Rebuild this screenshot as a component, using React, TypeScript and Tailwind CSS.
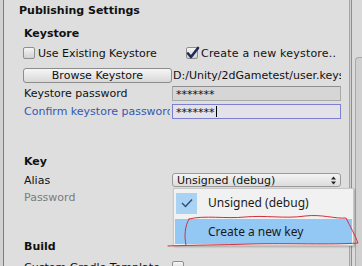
import React from 'react';

const Checkbox = ({ checked = false }: { checked?: boolean }) => (
  <div className="relative w-[12px] h-[12px] shrink-0 rounded-[2px] border border-[#8f8f8f] bg-gradient-to-b from-[#f4f4f4] to-[#d2d2d2]">
    {checked && (
      <svg className="absolute -left-[1px] -top-[2px]" width="14" height="14" viewBox="0 0 14 14">
        <path d="M2 7.5 L5 11 L12 2" fill="none" stroke="#1f2b57" strokeWidth="2.6" strokeLinecap="round" strokeLinejoin="round" />
      </svg>
    )}
  </div>
);

const Label = ({ children, className = '' }: { children: React.ReactNode; className?: string }) => (
  <div className={`w-[166px] mr-[2px] shrink-0 pl-[20px] whitespace-nowrap overflow-hidden ${className}`}>{children}</div>
);

const App = () => {
  return (
    <div className="relative w-[362px] h-[266px] overflow-hidden bg-[#dedede] flex font-['DejaVu_Sans',sans-serif] text-[11px] text-[#111] leading-none">
      {/* left edge */}
      <div className="w-[3px] bg-[#d2d2d2]" />
      <div className="w-px bg-[#7e7e7e]" />

      {/* inspector content */}
      <div className="w-[345px] flex flex-col overflow-hidden *:shrink-0">
        <div className="h-[20px] flex items-center pl-[15px] font-bold">Publishing Settings</div>

        <div className="mt-[2px] h-[22px] flex items-center pl-[20px] font-bold">Keystore</div>

        <div className="mt-[2px] h-[14px] flex items-center">
          <div className="w-[181px] shrink-0 pl-[19px] flex items-center gap-[3px]">
            <Checkbox />
            <span>Use Existing Keystore</span>
          </div>
          <div className="flex items-center gap-[3px] pl-[1px]">
            <Checkbox checked />
            <span className="tracking-[0.2px]">Create a new keystore..</span>
          </div>
        </div>

        <div className="mt-[8px] h-[15px] flex items-center">
          <div className="w-[168px] shrink-0 pl-[19px] h-full">
            <div className="h-full rounded-[3px] border border-[#8c8c8c] bg-gradient-to-b from-[#f6f6f6] to-[#d8d8d8] flex items-center justify-center">
              Browse Keystore
            </div>
          </div>
          <div className="w-[169px] overflow-hidden whitespace-nowrap pl-[1px]">D:/Unity/2dGametest/user.keystore</div>
        </div>

        <div className="mt-[3px] h-[15px] flex items-center">
          <Label>Keystore password</Label>
          <div className="w-[169px] h-full border border-[#a9a9a9] border-t-[#8e8e8e] bg-[#d6d6d6] flex items-center pl-[3px] pt-[2px]">*******</div>
        </div>

        <div className="mt-[3px] h-[15px] flex items-center">
          <Label className="text-[#3656b0]">Confirm keystore password</Label>
          <div className="w-[169px] h-full border border-[#7c80cf] bg-[#e2e2e8] flex items-center pl-[3px] pt-[2px]">
            *******<span className="ml-px w-px h-[11px] -mt-[2px] bg-black" />
          </div>
        </div>

        <div className="mt-[31px] h-[22px] flex items-center pl-[20px] font-bold">Key</div>

        <div className="mt-[1px] h-[14px] flex items-center">
          <Label>Alias</Label>
          <div className="w-[169px] h-full rounded-[3px] border border-[#9a9a9a] bg-gradient-to-b from-[#f4f4f4] to-[#dcdcdc] flex items-center justify-between pl-[4px] pr-[4px]">
            <span>Unsigned (debug)</span>
            <svg width="5" height="9" viewBox="0 0 5 9">
              <path d="M2.5 0.5 L5 3.5 L0 3.5 Z M2.5 8.5 L5 5.5 L0 5.5 Z" fill="#222" />
            </svg>
          </div>
        </div>

        <div className="mt-[3px] h-[14px] flex items-center">
          <Label className="text-[#7b7b7b]">Password</Label>
        </div>

        <div className="mt-[31px] h-[22px] flex items-center pl-[20px] font-bold">Build</div>

        <div className="mt-[3px] h-[14px] flex items-center">
          <Label>Custom Gradle Template</Label>
          <Checkbox />
        </div>
      </div>

      {/* panel dividers and scrollbar */}
      <div className="w-px bg-[#a6a6a6]" />
      <div className="w-px bg-[#cfcfcf]" />
      <div className="w-px bg-[#8e8e8e]" />
      <div className="w-[3px] bg-[#dadada]" />
      <div className="flex-1 flex flex-col bg-[#dadada]">
        <div className="mt-[57px] flex-1 rounded-tl-[4px] border-l border-t border-[#a8a8a8] bg-[#d0d0d0]" />
      </div>

      {/* dropdown popup */}
      <div className="absolute left-[173px] top-[188px] w-[181px] h-[58px] bg-[#f1f1f1] border border-[#c8c8c8] shadow-[1px_1px_2px_rgba(0,0,0,0.25)] p-[1px] font-['Noto_Sans',sans-serif] text-[12px] text-[#1a1a1a]">
        <div className="h-[26px] flex items-center">
          <div className="w-[21px] h-[21px] ml-px bg-[#a9d2f3] flex items-center justify-center">
            <svg width="12" height="10" viewBox="0 0 12 10">
              <path d="M1 5 L4.5 8.5 L11 1.5" fill="none" stroke="#274f7e" strokeWidth="1.4" />
            </svg>
          </div>
          <span className="ml-[11px]">Unsigned (debug)</span>
        </div>
        <div className="mt-[3px] h-[25px] bg-[#93c8f5] flex items-center">
          <span className="ml-[33px]">Create a new key</span>
        </div>
      </div>

      {/* red hand-drawn mark */}
      <svg className="absolute left-0 top-0 pointer-events-none" width="362" height="266" viewBox="0 0 362 266">
        <path
          d="M189 219 C 205 215, 225 219, 245 217 C 265 215, 285 219, 305 216 C 322 214, 335 219, 346 218 C 350 226, 355 235, 358 243 C 330 245, 290 243, 250 244 C 220 245, 195 245, 168 246 M 189 219 C 185 226, 184 236, 186 245"
          fill="none"
          stroke="#d0303a"
          strokeWidth="1"
          strokeLinecap="round"
        />
      </svg>
    </div>
  );
};

export default App;
